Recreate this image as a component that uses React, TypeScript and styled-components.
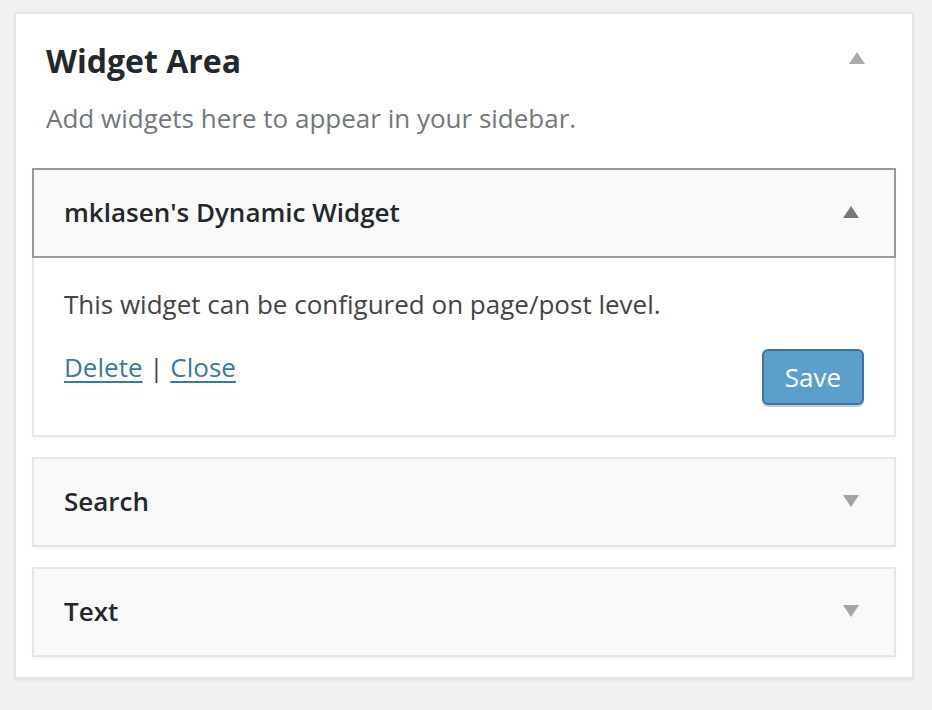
import React from "react";
import styled, { createGlobalStyle } from "styled-components";

const Global = createGlobalStyle`
  html, body { margin: 0; padding: 0; background: #f1f1f1; }
  body { font-family: "Open Sans", "Noto Sans", sans-serif; -webkit-font-smoothing: antialiased; }
`;

const Page = styled.div`
  padding: 12px 0 30px 14px;
`;

const Panel = styled.section`
  width: 900px;
  box-sizing: border-box;
  background: #fff;
  border: 2px solid #e5e5e5;
  box-shadow: 0 2px 2px rgba(0, 0, 0, 0.04);
  padding: 0 16px 20px;
`;

const PanelHead = styled.header`
  display: flex;
  justify-content: space-between;
  align-items: flex-start;
  padding: 25px 31px 0 14px;
`;

const Title = styled.h2`
  margin: 0;
  font-size: 32px;
  line-height: 44px;
  font-weight: 700;
  color: #23282d;
`;

const Description = styled.p`
  margin: 17px 0 0;
  padding: 0 14px;
  font-size: 26px;
  line-height: 36px;
  color: #72777c;
`;

const Arrow = styled.span<{ $dir: "up" | "down"; $color: string; $mt?: number }>`
  width: 0;
  height: 0;
  margin-top: ${(p) => p.$mt ?? 0}px;
  border-left: 8px solid transparent;
  border-right: 8px solid transparent;
  ${(p) =>
    p.$dir === "up"
      ? `border-bottom: 12px solid ${p.$color};`
      : `border-top: 12px solid ${p.$color};`}
`;

const WidgetList = styled.div`
  display: flex;
  flex-direction: column;
  gap: 20px;
  margin-top: 32px;
`;

const Widget = styled.div`
  box-shadow: 0 2px 2px rgba(0, 0, 0, 0.04);
`;

const WidgetHead = styled.div<{ $open?: boolean }>`
  display: flex;
  justify-content: space-between;
  align-items: center;
  padding: 24px 35px 26px 30px;
  background: #f9f9f9;
  border: 2px solid ${(p) => (p.$open ? "#999" : "#e5e5e5")};
`;

const WidgetTitle = styled.h3`
  margin: 0;
  font-size: 26px;
  line-height: 36px;
  font-weight: 600;
  color: #23282d;
`;

const WidgetBody = styled.div`
  background: #fff;
  border: 2px solid #e5e5e5;
  border-top: none;
  padding: 28px 30px 30px;
`;

const BodyText = styled.p`
  margin: 0;
  font-size: 26px;
  line-height: 36px;
  color: #444;
`;

const Actions = styled.div`
  display: flex;
  justify-content: space-between;
  align-items: flex-start;
  margin-top: 27px;
`;

const Links = styled.div`
  font-size: 26px;
  line-height: 36px;
  color: #444;
`;

const Link = styled.a`
  color: #3a77a8;
  text-decoration: underline;
  text-underline-offset: 4px;
  text-decoration-thickness: 2px;
  cursor: pointer;
`;

const SaveButton = styled.button`
  height: 56px;
  padding: 0 21px;
  font-family: "Open Sans", "Noto Sans", sans-serif;
  font-size: 26px;
  line-height: 52px;
  color: #fff;
  background: #5b9fca;
  border: 2px solid #3f72a0;
  border-radius: 6px;
  box-shadow: 0 2px 0 rgba(63, 114, 160, 0.35);
`;

export default function App() {
  return (
    <>
      <Global />
      <Page>
        <Panel>
          <PanelHead>
            <Title>Widget Area</Title>
            <Arrow $dir="up" $color="#aaa" $mt={13} />
          </PanelHead>
          <Description>Add widgets here to appear in your sidebar.</Description>
          <WidgetList>
            <Widget>
              <WidgetHead $open>
                <WidgetTitle>mklasen's Dynamic Widget</WidgetTitle>
                <Arrow $dir="up" $color="#777" />
              </WidgetHead>
              <WidgetBody>
                <BodyText>This widget can be configured on page/post level.</BodyText>
                <Actions>
                  <Links>
                    <Link>Delete</Link> | <Link>Close</Link>
                  </Links>
                  <SaveButton>Save</SaveButton>
                </Actions>
              </WidgetBody>
            </Widget>
            <Widget>
              <WidgetHead>
                <WidgetTitle>Search</WidgetTitle>
                <Arrow $dir="down" $color="#a0a5aa" />
              </WidgetHead>
            </Widget>
            <Widget>
              <WidgetHead>
                <WidgetTitle>Text</WidgetTitle>
                <Arrow $dir="down" $color="#a0a5aa" />
              </WidgetHead>
            </Widget>
          </WidgetList>
        </Panel>
      </Page>
    </>
  );
}
